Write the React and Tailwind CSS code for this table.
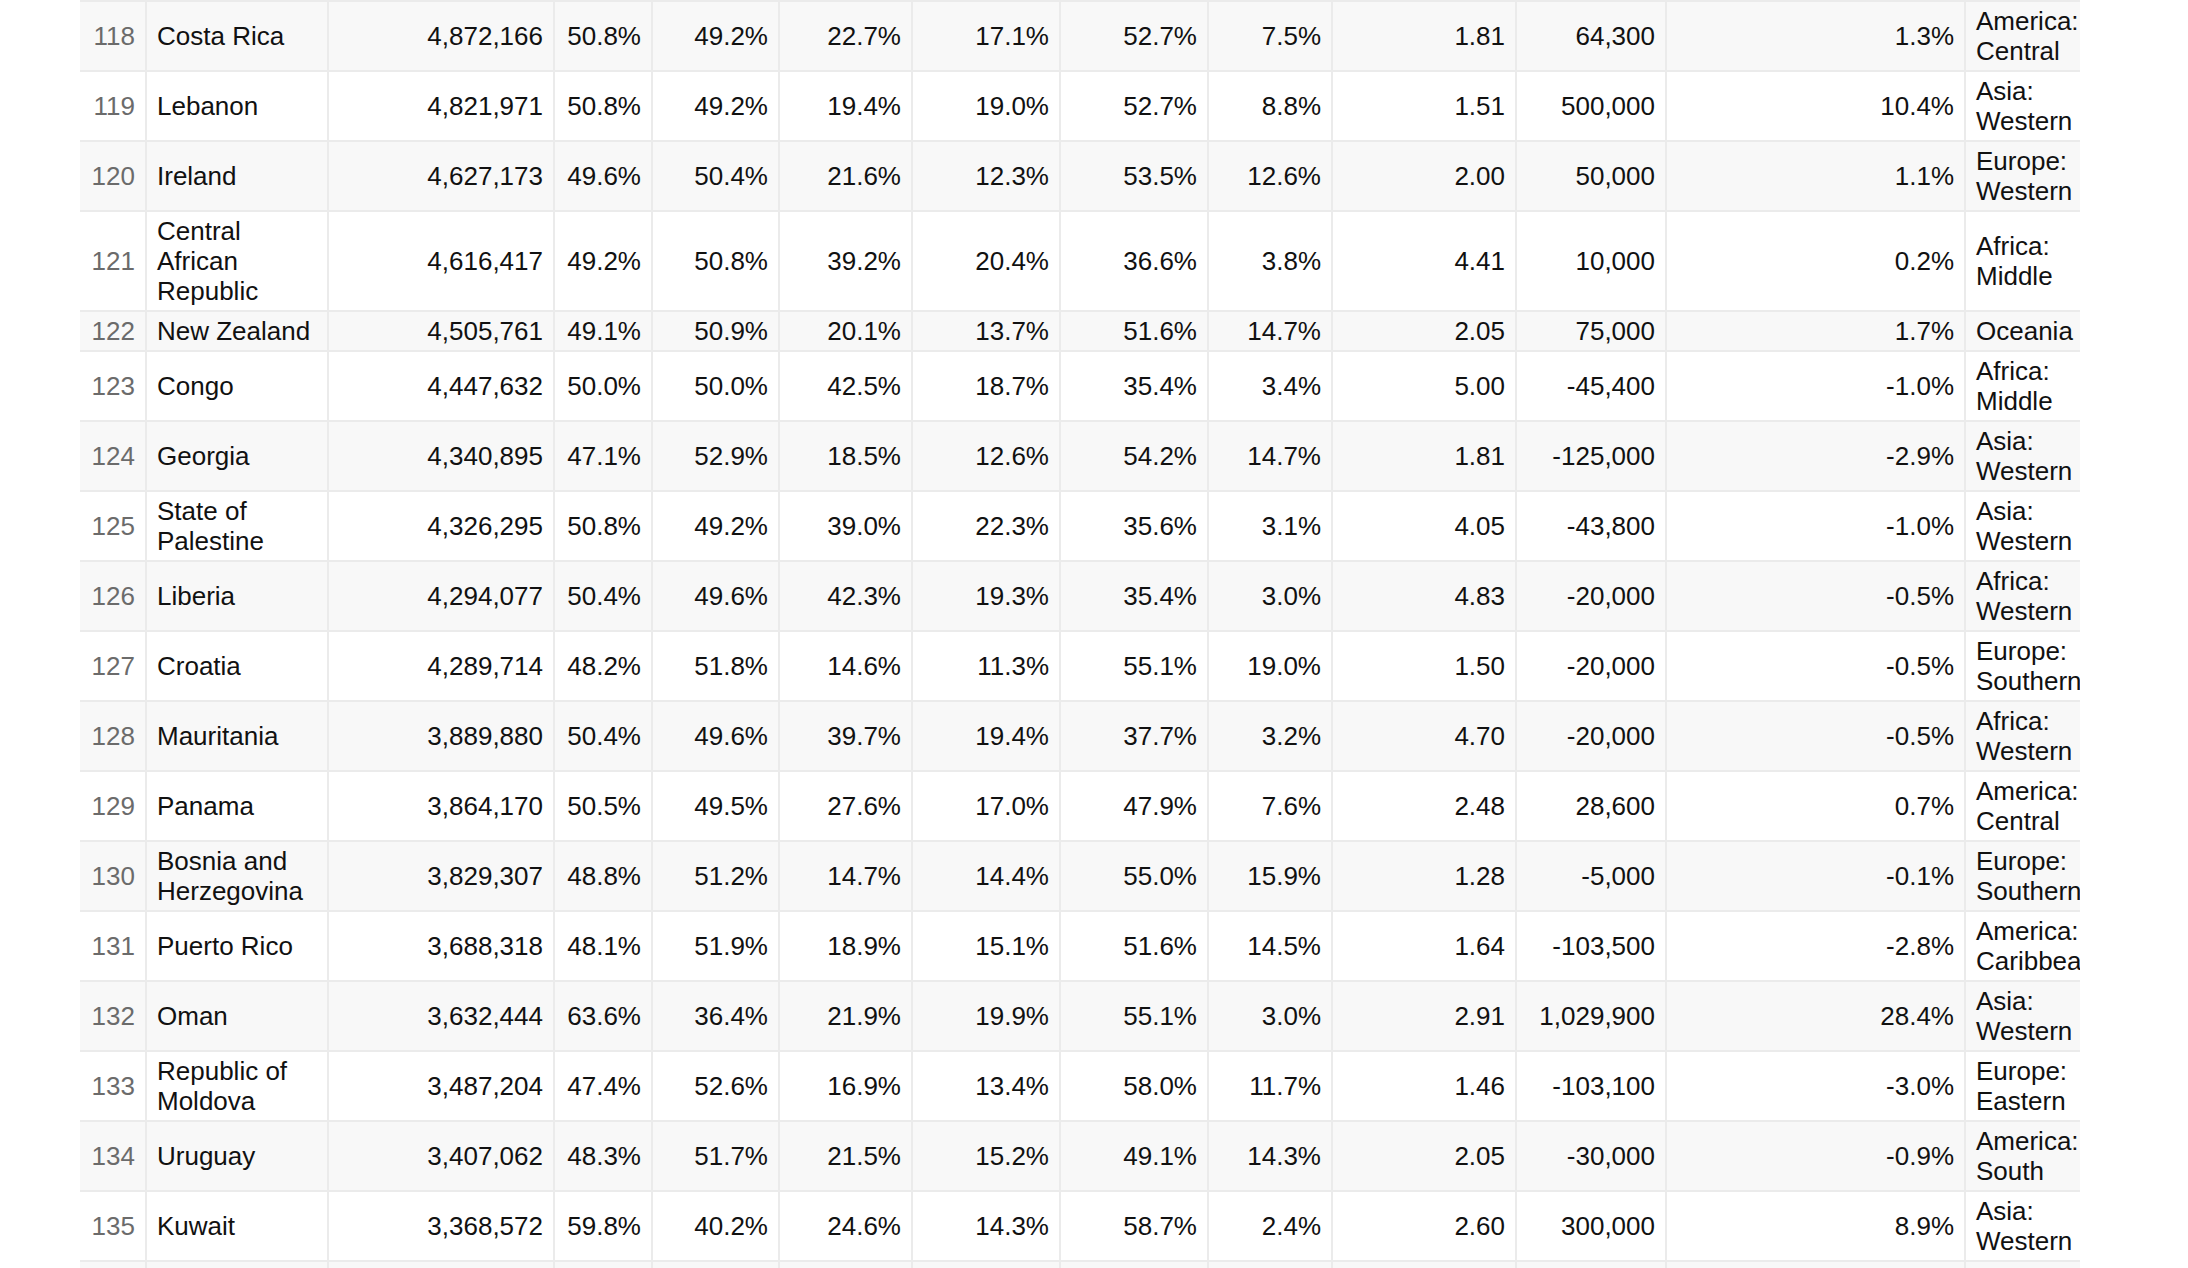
import React from 'react';

const rows = [
  ['118', 'Costa Rica', '4,872,166', '50.8%', '49.2%', '22.7%', '17.1%', '52.7%', '7.5%', '1.81', '64,300', '1.3%', 'America: Central'],
  ['119', 'Lebanon', '4,821,971', '50.8%', '49.2%', '19.4%', '19.0%', '52.7%', '8.8%', '1.51', '500,000', '10.4%', 'Asia: Western'],
  ['120', 'Ireland', '4,627,173', '49.6%', '50.4%', '21.6%', '12.3%', '53.5%', '12.6%', '2.00', '50,000', '1.1%', 'Europe: Western'],
  ['121', 'Central African Republic', '4,616,417', '49.2%', '50.8%', '39.2%', '20.4%', '36.6%', '3.8%', '4.41', '10,000', '0.2%', 'Africa: Middle'],
  ['122', 'New Zealand', '4,505,761', '49.1%', '50.9%', '20.1%', '13.7%', '51.6%', '14.7%', '2.05', '75,000', '1.7%', 'Oceania'],
  ['123', 'Congo', '4,447,632', '50.0%', '50.0%', '42.5%', '18.7%', '35.4%', '3.4%', '5.00', '-45,400', '-1.0%', 'Africa: Middle'],
  ['124', 'Georgia', '4,340,895', '47.1%', '52.9%', '18.5%', '12.6%', '54.2%', '14.7%', '1.81', '-125,000', '-2.9%', 'Asia: Western'],
  ['125', 'State of Palestine', '4,326,295', '50.8%', '49.2%', '39.0%', '22.3%', '35.6%', '3.1%', '4.05', '-43,800', '-1.0%', 'Asia: Western'],
  ['126', 'Liberia', '4,294,077', '50.4%', '49.6%', '42.3%', '19.3%', '35.4%', '3.0%', '4.83', '-20,000', '-0.5%', 'Africa: Western'],
  ['127', 'Croatia', '4,289,714', '48.2%', '51.8%', '14.6%', '11.3%', '55.1%', '19.0%', '1.50', '-20,000', '-0.5%', 'Europe: Southern'],
  ['128', 'Mauritania', '3,889,880', '50.4%', '49.6%', '39.7%', '19.4%', '37.7%', '3.2%', '4.70', '-20,000', '-0.5%', 'Africa: Western'],
  ['129', 'Panama', '3,864,170', '50.5%', '49.5%', '27.6%', '17.0%', '47.9%', '7.6%', '2.48', '28,600', '0.7%', 'America: Central'],
  ['130', 'Bosnia and Herzegovina', '3,829,307', '48.8%', '51.2%', '14.7%', '14.4%', '55.0%', '15.9%', '1.28', '-5,000', '-0.1%', 'Europe: Southern'],
  ['131', 'Puerto Rico', '3,688,318', '48.1%', '51.9%', '18.9%', '15.1%', '51.6%', '14.5%', '1.64', '-103,500', '-2.8%', 'America: Caribbean'],
  ['132', 'Oman', '3,632,444', '63.6%', '36.4%', '21.9%', '19.9%', '55.1%', '3.0%', '2.91', '1,029,900', '28.4%', 'Asia: Western'],
  ['133', 'Republic of Moldova', '3,487,204', '47.4%', '52.6%', '16.9%', '13.4%', '58.0%', '11.7%', '1.46', '-103,100', '-3.0%', 'Europe: Eastern'],
  ['134', 'Uruguay', '3,407,062', '48.3%', '51.7%', '21.5%', '15.2%', '49.1%', '14.3%', '2.05', '-30,000', '-0.9%', 'America: South'],
  ['135', 'Kuwait', '3,368,572', '59.8%', '40.2%', '24.6%', '14.3%', '58.7%', '2.4%', '2.60', '300,000', '8.9%', 'Asia: Western'],
  ['136', 'Mongolia', '3,278,290', '49.4%', '50.6%', '30.6%', '14.9%', '50.3%', '4.2%', '2.90', '-850', '0.0%', 'Asia: Eastern'],
];

// column widths incl. the 2px right border
const widths = ['w-[67px]', 'w-[182px]', 'w-[226px]', 'w-[98px]', 'w-[127px]', 'w-[133px]', 'w-[148px]', 'w-[148px]', 'w-[124px]', 'w-[184px]', 'w-[150px]', 'w-[299px]', 'w-[150px]'];

const cellBase = 'px-[10px] py-[4px] align-middle border-b-2 border-[#ebebeb]';

const App = () => {
  return (
    <div className="h-screen w-full overflow-hidden bg-white">
      <div className="ml-[80px] w-[2000px] overflow-hidden">
        <table
          className="w-[2036px] table-fixed border-separate border-spacing-0 border-t-2 border-[#ebebeb] text-[26px] leading-[30px] text-[#111]"
          style={{ fontFamily: '"Liberation Sans", Arial, Helvetica, sans-serif' }}
        >
          <colgroup>
            {widths.map((w, i) => (
              <col key={i} className={w} />
            ))}
          </colgroup>
          <tbody>
            {rows.map((r) => {
              const shaded = Number(r[0]) % 2 === 0;
              return (
                <tr key={r[0]} className={shaded ? 'bg-[#f8f8f8]' : 'bg-white'}>
                  <td className={`${cellBase} border-r-2 text-right text-[#6b6b6b]`}>{r[0]}</td>
                  <td className={`${cellBase} border-r-2 text-left`}>{r[1]}</td>
                  {r.slice(2, 12).map((v, i) => (
                    <td key={i} className={`${cellBase} border-r-2 text-right whitespace-nowrap`}>
                      {v}
                    </td>
                  ))}
                  <td className={`${cellBase} text-left`}>{r[12]}</td>
                </tr>
              );
            })}
          </tbody>
        </table>
      </div>
    </div>
  );
};

export default App;
